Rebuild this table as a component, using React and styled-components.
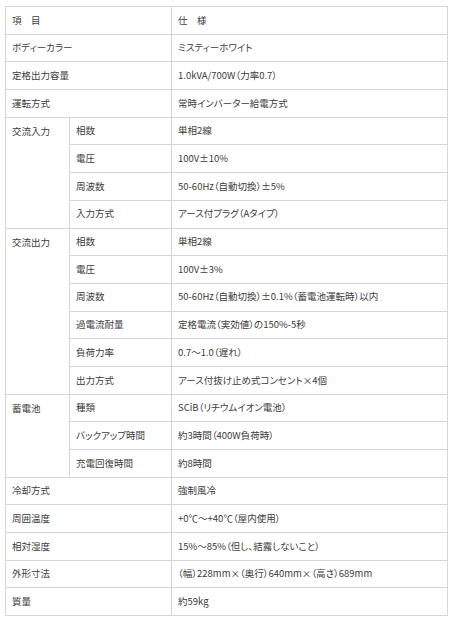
import React from "react";
import styled, { createGlobalStyle } from "styled-components";

const GlobalStyle = createGlobalStyle`
  body {
    margin: 0;
    background: #ffffff;
    font-family: "Noto Sans CJK JP", "Noto Sans", sans-serif;
  }
`;

const Page = styled.div`
  padding: 6px 0 0 5px;
`;

const SpecTable = styled.table`
  width: 443px;
  border-collapse: collapse;
  table-layout: fixed;
  font-size: 9.5px;
  color: #3c3c3c;
  font-feature-settings: "palt";
`;

const Row = styled.tr`
  height: 27.7px;
`;

const Cell = styled.td`
  border: 1px solid #d6d6d6;
  padding: 0 6px;
  vertical-align: ${(p) => (p.$top ? "top" : "middle")};
  padding-top: ${(p) => (p.$top ? "9px" : "0")};
  white-space: nowrap;
  line-height: 1;
`;

const header = ["項　目", "仕　様"];

const simple = [
  ["ボディーカラー", "ミスティーホワイト"],
  ["定格出力容量", "1.0kVA/700W（力率0.7）"],
  ["運転方式", "常時インバーター給電方式"],
];

const groups = [
  {
    name: "交流入力",
    rows: [
      ["相数", "単相2線"],
      ["電圧", "100V±10%"],
      ["周波数", "50-60Hz（自動切換）±5%"],
      ["入力方式", "アース付プラグ（Aタイプ）"],
    ],
  },
  {
    name: "交流出力",
    rows: [
      ["相数", "単相2線"],
      ["電圧", "100V±3%"],
      ["周波数", "50-60Hz（自動切換）±0.1%（蓄電池運転時）以内"],
      ["過電流耐量", "定格電流（実効値）の150%-5秒"],
      ["負荷力率", "0.7～1.0（遅れ）"],
      ["出力方式", "アース付抜け止め式コンセント×4個"],
    ],
  },
  {
    name: "蓄電池",
    rows: [
      ["種類", "SCiB（リチウムイオン電池）"],
      ["バックアップ時間", "約3時間（400W負荷時）"],
      ["充電回復時間", "約8時間"],
    ],
  },
];

const tail = [
  ["冷却方式", "強制風冷"],
  ["周囲温度", "+0℃～+40℃（屋内使用）"],
  ["相対湿度", "15%～85%（但し、結露しないこと）"],
  ["外形寸法", "（幅）228mm×（奥行）640mm×（高さ）689mm"],
  ["質量", "約59kg"],
];

export default function App() {
  return (
    <Page>
      <GlobalStyle />
      <SpecTable>
        <colgroup>
          <col style={{ width: 64 }} />
          <col style={{ width: 102 }} />
          <col />
        </colgroup>
        <tbody>
          <Row>
            <Cell colSpan={2}>{header[0]}</Cell>
            <Cell>{header[1]}</Cell>
          </Row>
          {simple.map(([k, v]) => (
            <Row key={k}>
              <Cell colSpan={2}>{k}</Cell>
              <Cell>{v}</Cell>
            </Row>
          ))}
          {groups.map((g) =>
            g.rows.map(([k, v], i) => (
              <Row key={g.name + k}>
                {i === 0 && (
                  <Cell rowSpan={g.rows.length} $top>
                    {g.name}
                  </Cell>
                )}
                <Cell>{k}</Cell>
                <Cell>{v}</Cell>
              </Row>
            ))
          )}
          {tail.map(([k, v]) => (
            <Row key={k}>
              <Cell colSpan={2}>{k}</Cell>
              <Cell>{v}</Cell>
            </Row>
          ))}
        </tbody>
      </SpecTable>
    </Page>
  );
}
